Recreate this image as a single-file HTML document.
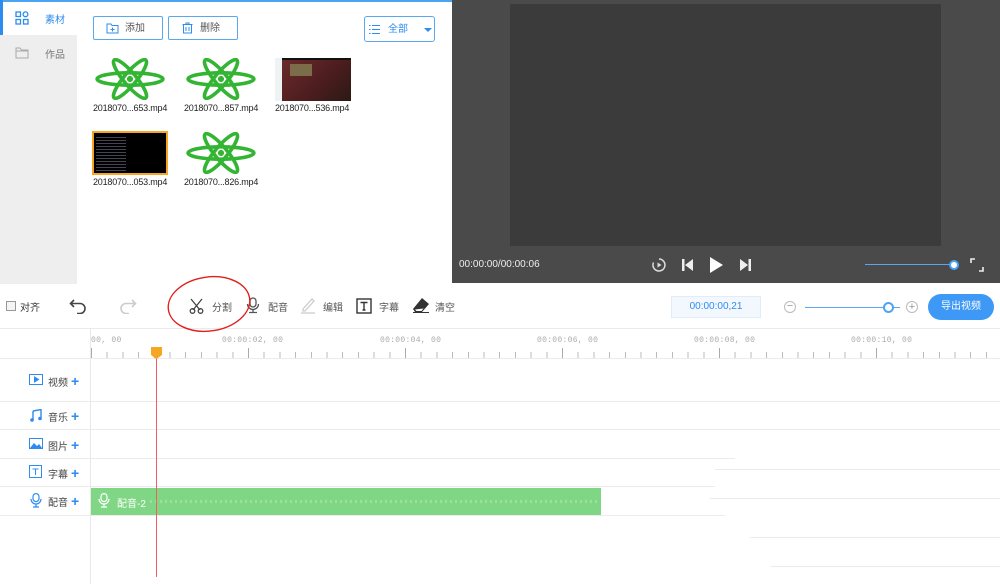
<!DOCTYPE html>
<html><head><meta charset="utf-8"><style>
*{margin:0;padding:0;box-sizing:border-box}
body{width:1000px;height:584px;position:relative;overflow:hidden;background:#fff;font-family:"Liberation Sans","Noto Sans CJK SC",sans-serif;font-size:10px;color:#333}
.a{position:absolute}
.btn{position:absolute;border:1px solid #5aa7f0;border-radius:2px;background:#fff;height:24px;top:16px;color:#555;font-size:10px;line-height:24px}
.fn{position:absolute;font-size:9px;color:#222;letter-spacing:-0.2px}
.hl{position:absolute;height:1px;background:#ececec}
.tl{position:absolute;left:28px;font-size:10px;color:#444}
.plus{color:#2d8cf0;font-size:14px;font-weight:bold;margin-left:3px}
.rl{position:absolute;top:336px;font-size:8px;color:#aaa;font-family:"Liberation Mono",monospace;letter-spacing:0.3px}
.tb{position:absolute;top:299px;font-size:10px;color:#555}
</style></head><body>
<div class="a" style="left:0;top:0;width:1000px;height:2px;background:#4aa3f5"></div>
<div class="a" style="left:0;top:35px;width:77px;height:248px;background:#eeeeee"></div>
<div class="a" style="left:0;top:0;width:3px;height:35px;background:#2d8cf0"></div>
<svg class="a" style="left:15px;top:11px" width="14" height="14" viewBox="0 0 14 14" fill="none" stroke="#2d8cf0" stroke-width="1.3"><rect x="1" y="1" width="4.5" height="4.5"/><circle cx="10.5" cy="3.3" r="2.4"/><rect x="1" y="8.5" width="4.5" height="4.5"/><rect x="8.5" y="8.5" width="4.5" height="4.5"/></svg>
<div class="a" style="left:45px;top:11px;color:#2d8cf0;font-size:10px">素材</div>
<svg class="a" style="left:15px;top:47px" width="14" height="12" viewBox="0 0 14 12" fill="none" stroke="#aaa" stroke-width="1"><path d="M1 1h4l1.5 2H13v8H1z M1 4h12"/></svg>
<div class="a" style="left:45px;top:46px;color:#777;font-size:10px">作品</div>
<div class="btn" style="left:93px;width:70px"><svg class="a" style="left:12px;top:6px" width="13" height="11" viewBox="0 0 13 11" fill="none" stroke="#2d8cf0"><path d="M1 1h4l1 1.5h6V10H1z M6.5 4.5v4 M4.5 6.5h4"/></svg><span class="a" style="left:31px;top:0">添加</span></div>
<div class="btn" style="left:168px;width:70px"><svg class="a" style="left:13px;top:5px" width="11" height="12" viewBox="0 0 11 12" fill="none" stroke="#2d8cf0"><path d="M0.5 2.5h10 M4 2.5V1h3v1.5 M1.5 2.5V11h8V2.5 M4 5v4 M7 5v4"/></svg><span class="a" style="left:31px;top:0">删除</span></div>
<div class="btn" style="left:364px;width:71px;top:16px;height:26px;border-radius:3px;line-height:25px"><svg class="a" style="left:4px;top:8px" width="11" height="9" viewBox="0 0 11 9" stroke="#2d8cf0"><path d="M0 0.5h1.5M3 0.5h8M0 4.5h1.5M3 4.5h8M0 8.5h1.5M3 8.5h8"/></svg><span class="a" style="left:23px;top:0;color:#2d8cf0">全部</span><div class="a" style="left:59px;top:11px;border-left:4px solid transparent;border-right:4px solid transparent;border-top:4px solid #2d8cf0"></div></div>
<svg width="0" height="0" style="position:absolute"><defs><g id="atom"><g fill="none" stroke="#33b533" stroke-width="3.5"><ellipse cx="35" cy="20" rx="32" ry="6"/><ellipse cx="35" cy="20" rx="24" ry="6" transform="rotate(50 35 20)"/><ellipse cx="35" cy="20" rx="24" ry="6" transform="rotate(-50 35 20)"/></g><circle cx="35" cy="20" r="3" fill="#33b533"/></g></defs></svg>
<svg class="a" style="left:94px;top:58px" width="72" height="42" viewBox="0 0 70 40"><use href="#atom"/></svg>
<svg class="a" style="left:185px;top:58px" width="72" height="42" viewBox="0 0 70 40"><use href="#atom"/></svg>
<svg class="a" style="left:185px;top:132px" width="72" height="42" viewBox="0 0 70 40"><use href="#atom"/></svg>
<div class="a" style="left:275px;top:58px;width:76px;height:43px;background:#eef3f3"></div>
<div class="a" style="left:282px;top:58px;width:69px;height:43px;background:linear-gradient(135deg,#6b2a2a,#4a1c1e 60%,#2a1a14);border-top:2px solid #111"></div>
<div class="a" style="left:290px;top:64px;width:22px;height:12px;background:#7b6d4a"></div>
<div class="a" style="left:92px;top:131px;width:76px;height:44px;background:#000;border:2px solid #f5a623"></div>
<div class="a" style="left:96px;top:135px;width:30px;height:36px;background:repeating-linear-gradient(#000 0 2px,#556 2px 3px);opacity:.8"></div>
<div class="fn" style="left:93px;top:103px">2018070...653.mp4</div>
<div class="fn" style="left:184px;top:103px">2018070...857.mp4</div>
<div class="fn" style="left:275px;top:103px">2018070...536.mp4</div>
<div class="fn" style="left:93px;top:177px">2018070...053.mp4</div>
<div class="fn" style="left:184px;top:177px">2018070...826.mp4</div>
<div class="a" style="left:452px;top:0;width:548px;height:283px;background:#4a4a4a"></div>
<div class="a" style="left:510px;top:4px;width:431px;height:242px;background:#3b3b3b"></div>
<div class="a" style="left:459px;top:259px;color:#eee;font-size:10px">00:00:00/00:00:06</div>
<svg class="a" style="left:651px;top:257px" width="16" height="16" viewBox="0 0 16 16" fill="none" stroke="#ddd" stroke-width="1.5"><path d="M8 2a6 6 0 1 1-5.5 3.5"/><path d="M6.5 5.5v5l4-2.5z" fill="#ddd" stroke="none"/></svg>
<svg class="a" style="left:682px;top:258px" width="12" height="14" viewBox="0 0 12 14" fill="#eee"><rect x="0" y="1" width="2.5" height="12"/><path d="M11 1v12L3 7z"/></svg>
<svg class="a" style="left:709px;top:256px" width="15" height="18" viewBox="0 0 15 18" fill="#fff"><path d="M1 1v16l13-8z"/></svg>
<svg class="a" style="left:739px;top:258px" width="12" height="14" viewBox="0 0 12 14" fill="#eee"><path d="M1 1v12l8-6z"/><rect x="9.5" y="1" width="2.5" height="12"/></svg>
<div class="a" style="left:865px;top:264px;width:88px;height:1px;background:#5aa7f0"></div>
<div class="a" style="left:949px;top:260px;width:10px;height:10px;border-radius:50%;background:#fff;border:2px solid #4aa3f5"></div>
<svg class="a" style="left:970px;top:258px" width="14" height="14" viewBox="0 0 14 14" fill="none" stroke="#eee" stroke-width="1.6"><path d="M1 5V1h4 M13 9v4H9"/></svg>
<div class="a" style="left:0;top:283px;width:77px;height:1px;background:#eee"></div>
<div class="a" style="left:6px;top:301px;width:10px;height:10px;border:1px solid #999;background:#f4f4f4"></div>
<div class="a" style="left:20px;top:299px;font-size:10px">对齐</div>
<svg class="a" style="left:69px;top:298px" width="18" height="16" viewBox="0 0 18 16" fill="none" stroke="#444" stroke-width="1.6"><path d="M5 2L1.5 5.5 5 9 M2 5.5h9a5 5 0 0 1 0 10H8"/></svg>
<svg class="a" style="left:119px;top:298px" width="18" height="16" viewBox="0 0 18 16" fill="none" stroke="#ccc" stroke-width="1.6"><path d="M13 2l3.5 3.5L13 9 M16 5.5H7a5 5 0 0 0 0 10h3"/></svg>
<svg class="a" style="left:189px;top:298px" width="15" height="16" viewBox="0 0 15 16" fill="none" stroke="#444" stroke-width="1.3"><path d="M2 1l9 11 M13 1L4 12"/><circle cx="3.5" cy="13" r="2.3"/><circle cx="11.5" cy="13" r="2.3"/></svg>
<div class="tb" style="left:212px">分割</div>
<svg class="a" style="left:246px;top:297px" width="14" height="17" viewBox="0 0 14 17" fill="none" stroke="#555" stroke-width="1.3"><rect x="4" y="1" width="6" height="9" rx="3"/><path d="M1.5 7a5.5 5.5 0 0 0 11 0 M7 12.5V15 M3 15.5h8"/></svg>
<div class="tb" style="left:268px">配音</div>
<svg class="a" style="left:300px;top:297px" width="16" height="17" viewBox="0 0 16 17" fill="none" stroke="#ccc" stroke-width="1.3"><path d="M3 12L12 2l2 2-9 10H3z M1 16h14"/></svg>
<div class="tb" style="left:323px">编辑</div>
<svg class="a" style="left:356px;top:298px" width="16" height="16" viewBox="0 0 16 16" fill="none" stroke="#333" stroke-width="1.4"><rect x="1" y="1" width="14" height="14"/><path d="M4.5 4.5h7 M8 4.5v7.5 M6.5 12h3"/></svg>
<div class="tb" style="left:379px">字幕</div>
<svg class="a" style="left:412px;top:297px" width="18" height="16" viewBox="0 0 18 16" fill="#333"><path d="M10 1l7 6-7 8H3l-2-3z M3 12.5l1.5 1.5h5l2-2.5"/><path d="M1 15.5h16" stroke="#333"/></svg>
<div class="tb" style="left:435px">清空</div>
<div class="a" style="left:671px;top:296px;width:90px;height:22px;background:#f3f8fe;border:1px solid #e0ecf9;color:#2d8cf0;font-size:10px;text-align:center;line-height:20px">00:00:00,21</div>
<div class="a" style="left:784px;top:301px;width:12px;height:12px;border:1px solid #bbb;border-radius:50%;color:#999;font-size:11px;line-height:9px;text-align:center">−</div>
<div class="a" style="left:805px;top:307px;width:95px;height:1px;background:#5aa7f0"></div>
<div class="a" style="left:883px;top:302px;width:11px;height:11px;border:2px solid #4aa3f5;border-radius:50%;background:#fff"></div>
<div class="a" style="left:906px;top:301px;width:12px;height:12px;border:1px solid #bbb;border-radius:50%;color:#999;font-size:11px;line-height:10px;text-align:center">+</div>
<div class="a" style="left:928px;top:294px;width:66px;height:26px;border-radius:13px;background:#3d99f5;color:#fff;font-size:10px;text-align:center;line-height:26px">导出视频</div>
<div class="a" style="left:0;top:328px;width:1000px;height:1px;background:#eaeaea"></div>
<div class="a" style="left:90px;top:328px;width:1px;height:256px;background:#e8e8e8"></div>
<div class="rl" style="left:91px">00, 00</div>
<div class="rl" style="left:222px">00:00:02, 00</div>
<div class="rl" style="left:380px">00:00:04, 00</div>
<div class="rl" style="left:537px">00:00:06, 00</div>
<div class="rl" style="left:694px">00:00:08, 00</div>
<div class="rl" style="left:851px">00:00:10, 00</div>
<div class="a" style="left:91px;top:352px;width:909px;height:6px;background:repeating-linear-gradient(90deg,#bbb 0 1px,transparent 1px 15.7px)"></div>
<div class="a" style="left:91px;top:348px;width:909px;height:10px;background:repeating-linear-gradient(90deg,#aaa 0 1px,transparent 1px 157px)"></div>
<div class="hl" style="left:0;top:358px;width:1000px"></div>
<div class="hl" style="left:0;top:401px;width:1000px"></div>
<div class="hl" style="left:0;top:429px;width:1000px"></div>
<div class="hl" style="left:0;top:458px;width:735px"></div>
<div class="hl" style="left:0;top:486px;width:715px"></div>
<div class="hl" style="left:715px;top:469px;width:285px"></div>
<div class="hl" style="left:710px;top:498px;width:290px"></div>
<div class="hl" style="left:0;top:515px;width:725px"></div>
<div class="hl" style="left:750px;top:537px;width:250px"></div>
<div class="hl" style="left:770px;top:566px;width:230px"></div>
<svg class="a" style="left:29px;top:374px" width="14" height="11" viewBox="0 0 14 11" fill="none" stroke="#2d8cf0"><rect x="0.5" y="0.5" width="13" height="10"/><path d="M5.5 3v5l4-2.5z" fill="#2d8cf0"/></svg>
<div class="tl" style="left:48px;top:373px">视频<span class="plus">+</span></div>
<svg class="a" style="left:30px;top:409px" width="12" height="13" viewBox="0 0 12 13" fill="#2d8cf0"><path d="M3 2l8-1.5v9" stroke="#2d8cf0" stroke-width="1.4" fill="none"/><path d="M3 2v9" stroke="#2d8cf0" stroke-width="1.4"/><circle cx="2" cy="11" r="1.8"/><circle cx="10" cy="9.5" r="1.8"/></svg>
<div class="tl" style="left:48px;top:408px">音乐<span class="plus">+</span></div>
<svg class="a" style="left:29px;top:438px" width="14" height="11" viewBox="0 0 14 11"><rect x="0.5" y="0.5" width="13" height="10" fill="none" stroke="#2d8cf0"/><path d="M1 10l4-5 3 3 2-2 3 4z" fill="#2d8cf0"/></svg>
<div class="tl" style="left:48px;top:437px">图片<span class="plus">+</span></div>
<svg class="a" style="left:29px;top:465px" width="13" height="13" viewBox="0 0 13 13" fill="none" stroke="#2d8cf0"><rect x="0.5" y="0.5" width="12" height="12"/><path d="M3.5 4h6M6.5 4v6"/></svg>
<div class="tl" style="left:48px;top:465px">字幕<span class="plus">+</span></div>
<svg class="a" style="left:30px;top:493px" width="12" height="15" viewBox="0 0 12 15" fill="none" stroke="#2d8cf0" stroke-width="1.2"><rect x="3" y="0.6" width="6" height="8" rx="3"/><path d="M1 6a5 5 0 0 0 10 0 M6 11v3 M3 14h6"/></svg>
<div class="tl" style="left:48px;top:493px">配音<span class="plus">+</span></div>
<div class="a" style="left:91px;top:488px;width:510px;height:27px;background:#7fd684"></div>
<div class="a" style="left:150px;top:500px;width:450px;height:3px;background:repeating-linear-gradient(90deg,#9be09f 0 2px,transparent 2px 5px)"></div>
<svg class="a" style="left:98px;top:493px" width="12" height="15" viewBox="0 0 12 15" fill="none" stroke="#fff" stroke-width="1.2"><rect x="3" y="0.6" width="6" height="8" rx="3"/><path d="M1 6a5 5 0 0 0 10 0 M6 11v3 M3 14h6"/></svg>
<div class="a" style="left:117px;top:495px;color:#fff;font-size:10px">配音-2</div>
<div class="a" style="left:156px;top:358px;width:1px;height:219px;background:#f06060"></div>
<svg class="a" style="left:151px;top:347px" width="11" height="12" viewBox="0 0 11 12"><path d="M0 0h11v8l-5.5 4L0 8z" fill="#f5a623"/></svg>
<svg class="a" style="left:165px;top:268px" width="90" height="66" viewBox="0 0 90 66"><ellipse cx="44" cy="36" rx="41" ry="27" fill="none" stroke="#e0201a" stroke-width="1.4" transform="rotate(-8 44 36)"/></svg>
</body></html>
